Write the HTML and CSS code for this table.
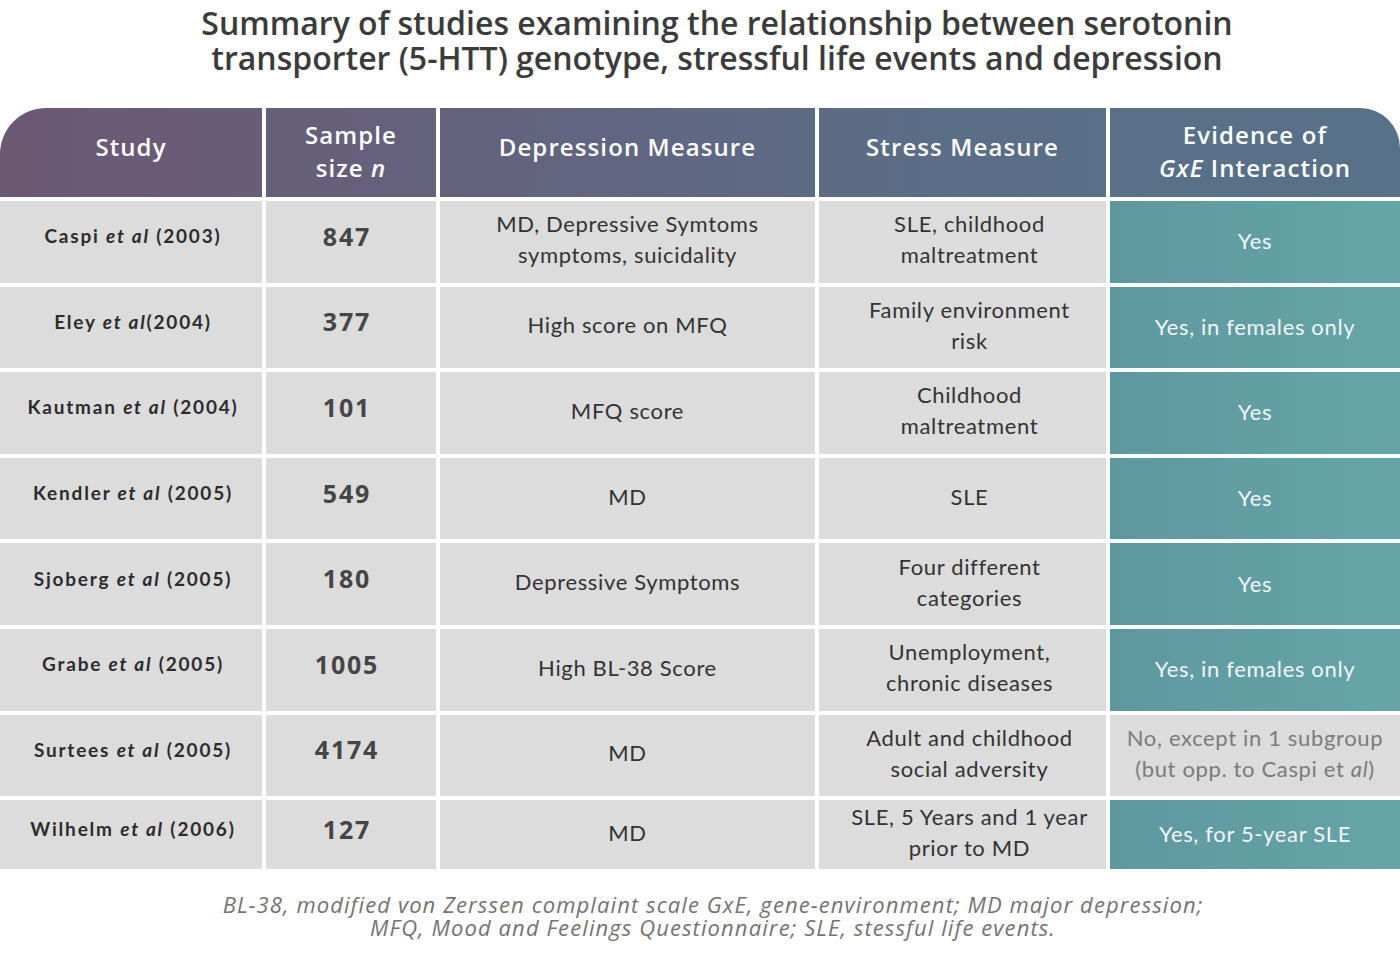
FILE: index.html
```html
<!DOCTYPE html>
<html lang="en">
<head>
<meta charset="utf-8">
<title>Summary of studies</title>
<link rel="stylesheet" href="styles.css">
</head>
<body>
<h1 class="title">Summary of studies examining the relationship between serotonin<br>transporter (5-HTT) genotype, stressful life events and depression</h1>
<div class="table">
  <div class="hd hd-first single"><span>Study</span></div>
  <div class="hd"><span>Sample<br>size <i>n</i></span></div>
  <div class="hd single"><span>Depression Measure</span></div>
  <div class="hd single"><span>Stress Measure</span></div>
  <div class="hd hd-last"><span>Evidence of<br><i>GxE</i> Interaction</span></div>

  <div class="c study"><span>Caspi <i>et al</i> (2003)</span></div>
  <div class="c num"><span>847</span></div>
  <div class="c txt"><span>MD, Depressive Symtoms<br>symptoms, suicidality</span></div>
  <div class="c txt stress"><span>SLE, childhood<br>maltreatment</span></div>
  <div class="c ev"><span>Yes</span></div>

  <div class="c study"><span>Eley <i>et al</i>(2004)</span></div>
  <div class="c num"><span>377</span></div>
  <div class="c txt"><span>High score on MFQ</span></div>
  <div class="c txt stress"><span>Family environment<br>risk</span></div>
  <div class="c ev"><span>Yes, in females only</span></div>

  <div class="c study"><span>Kautman <i>et al</i> (2004)</span></div>
  <div class="c num"><span>101</span></div>
  <div class="c txt"><span>MFQ score</span></div>
  <div class="c txt stress"><span>Childhood<br>maltreatment</span></div>
  <div class="c ev"><span>Yes</span></div>

  <div class="c study"><span>Kendler <i>et al</i> (2005)</span></div>
  <div class="c num"><span>549</span></div>
  <div class="c txt"><span>MD</span></div>
  <div class="c txt stress"><span>SLE</span></div>
  <div class="c ev"><span>Yes</span></div>

  <div class="c study"><span>Sjoberg <i>et al</i> (2005)</span></div>
  <div class="c num"><span>180</span></div>
  <div class="c txt"><span>Depressive Symptoms</span></div>
  <div class="c txt stress"><span>Four different<br>categories</span></div>
  <div class="c ev"><span>Yes</span></div>

  <div class="c study"><span>Grabe <i>et al</i> (2005)</span></div>
  <div class="c num"><span>1005</span></div>
  <div class="c txt"><span>High BL-38 Score</span></div>
  <div class="c txt stress"><span>Unemployment,<br>chronic diseases</span></div>
  <div class="c ev"><span>Yes, in females only</span></div>

  <div class="c study"><span>Surtees <i>et al</i> (2005)</span></div>
  <div class="c num"><span>4174</span></div>
  <div class="c txt"><span>MD</span></div>
  <div class="c txt stress"><span>Adult and childhood<br>social adversity</span></div>
  <div class="c txt ev-no"><span>No, except in 1 subgroup<br>(but opp. to Caspi et <i>al</i>)</span></div>

  <div class="c study"><span>Wilhelm <i>et al</i> (2006)</span></div>
  <div class="c num"><span>127</span></div>
  <div class="c txt"><span>MD</span></div>
  <div class="c txt stress"><span>SLE, 5 Years and 1 year<br>prior to MD</span></div>
  <div class="c ev"><span>Yes, for 5-year SLE</span></div>
</div>
<p class="foot">BL-38, modified von Zerssen complaint scale GxE, gene-environment; MD major depression;<br>MFQ, Mood and Feelings Questionnaire; SLE, stessful life events.</p>
</body>
</html>
```
FILE: styles.css
```css
html, body {
  margin: 0;
  padding: 0;
  background: #ffffff;
}
body {
  width: 1400px;
  height: 953px;
  overflow: hidden;
  font-family: "Lato", "Open Sans", sans-serif;
}
.title {
  margin: 0;
  padding: 5px 0 0 34px;
  height: 100px;
  box-sizing: border-box;
  text-align: center;
  font-family: "Open Sans", sans-serif;
  font-size: 32px;
  line-height: 35px;
  font-weight: 600;
  color: #3b3b3b;
}
.table {
  display: grid;
  grid-template-columns: 262px 170px 375px 287px 1fr;
  grid-template-rows: 89px repeat(7, 81.6px) 69px;
  gap: 4px;
  margin-top: 8px;
}
.hd {
  display: flex;
  align-items: center;
  justify-content: center;
  text-align: center;
  padding-bottom: 3px;
  color: #ffffff;
  font-family: "Open Sans", sans-serif;
  font-size: 24px;
  line-height: 33px;
  font-weight: 600;
  letter-spacing: 1.1px;
  background: linear-gradient(90deg, #6b5873 0%, #626480 40%, #5a6f87 70%, #577189 100%);
  background-attachment: fixed;
}
.hd.single {
  padding-bottom: 13px;
}
.hd-first { border-top-left-radius: 46px; }
.hd-last { border-top-right-radius: 40px; }
.c {
  display: flex;
  align-items: center;
  justify-content: center;
  text-align: center;
  background: #dcdcdc;
}
.study {
  font-size: 19px;
  font-weight: 700;
  color: #2c2c2c;
  letter-spacing: 1.8px;
  padding-bottom: 12px;
  padding-left: 4px;
}
.num {
  font-family: "Open Sans", sans-serif;
  font-size: 25px;
  font-weight: 700;
  color: #454545;
  letter-spacing: 1.8px;
  padding-bottom: 12px;
  padding-right: 8px;
}
.txt {
  font-size: 22px;
  line-height: 31px;
  color: #333333;
  letter-spacing: 0.65px;
  padding-bottom: 5px;
}
.stress {
  padding-left: 14px;
}
.ev {
  font-size: 22px;
  line-height: 31px;
  color: #f2f6f6;
  letter-spacing: 0.65px;
  padding-bottom: 2px;
  background: linear-gradient(90deg, #5e989f 0%, #65a5a7 100%);
}
.txt.ev-no {
  color: #7b7b7b;
  padding-left: 0;
}
.foot {
  margin: 24px 0 0;
  padding-left: 26px;
  text-align: center;
  font-family: "Open Sans", sans-serif;
  font-style: italic;
  font-size: 22px;
  line-height: 23px;
  color: #737373;
  letter-spacing: 1.1px;
}
```
